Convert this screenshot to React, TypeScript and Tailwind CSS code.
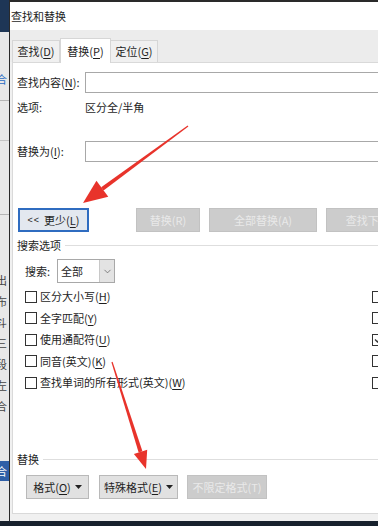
import React from 'react';
import { ChevronDown } from 'lucide-react';

const font = "font-['Noto_Sans_CJK_SC','Microsoft_YaHei',sans-serif]";

// label with one underlined access key, e.g. 查找内容(N):
function Key({ pre, k, post = ')' }: { pre: string; k: string; post?: string }) {
  return (
    <span className="whitespace-nowrap">
      {pre}(<span className="underline underline-offset-2">{k}</span>{post}
    </span>
  );
}

function Checkbox({ checked = false }: { checked?: boolean }) {
  return (
    <span className="w-[12px] h-[12px] flex-none border border-[#333] bg-white flex items-center justify-center">
      {checked && (
        <svg width="9" height="9" viewBox="0 0 9 9">
          <path d="M1 4.5 L3.5 7 L8 1.5" fill="none" stroke="#333" strokeWidth="1.3" />
        </svg>
      )}
    </span>
  );
}

function Arrow({ x1, y1, x2, y2, head, hw }: { x1: number; y1: number; x2: number; y2: number; head: number; hw: number }) {
  const dx = x2 - x1;
  const dy = y2 - y1;
  const len = Math.hypot(dx, dy);
  const ux = dx / len;
  const uy = dy / len;
  const nx = -uy;
  const ny = ux;
  const bx = x2 - ux * head;
  const by = y2 - uy * head;
  const w0 = 0.6;
  const w1 = 2;
  const shaft = [
    [x1 + nx * w0, y1 + ny * w0],
    [bx + nx * w1, by + ny * w1],
    [bx - nx * w1, by - ny * w1],
    [x1 - nx * w0, y1 - ny * w0],
  ];
  const tri = [
    [x2, y2],
    [bx + nx * hw, by + ny * hw],
    [bx - nx * hw, by - ny * hw],
  ];
  const pts = (a: number[][]) => a.map((p) => p.join(',')).join(' ');
  return (
    <g fill="#e8332b">
      <polygon points={pts(shaft)} />
      <polygon points={pts(tri)} />
    </g>
  );
}

function LeftStrip() {
  const chars = ['出', '布', '斗', '三', '段', '左', '合'];
  return (
    <div className={`w-[9px] flex-none flex flex-col overflow-hidden bg-[#e8e8e8] text-[11px] leading-none ${font}`}>
      <div className="h-[32px] bg-[#1e3656]" />
      <div className="h-[42px]" />
      <div className="h-[12px] -ml-[4px] text-[#2b6cc4]">合</div>
      <div className="h-[14px]" />
      <div className="h-px bg-[#b5b5b5]" />
      <div className="h-[39px]" />
      <div className="h-px bg-[#c4c4c4]" />
      <div className="h-[73px]" />
      <div className="h-px bg-[#b5b5b5]" />
      <div className="h-[55px]" />
      {chars.map((c, i) => (
        <div key={i} className="h-[21px] flex items-center -ml-[4px] text-[#444]">
          {c}
        </div>
      ))}
      <div className="h-[44px]" />
      <div className="h-[20px] bg-[#2f5fa7] flex items-center -ml-[4px] text-white">合</div>
      <div className="flex-1" />
    </div>
  );
}

export default function App() {
  return (
    <div className={`w-[378px] h-[526px] relative overflow-hidden flex flex-col bg-[#f0f0f0] text-[11px] text-[#1e1e1e] ${font}`}>
      <div className="flex flex-1 min-h-0">
        <LeftStrip />

        {/* Dialog */}
        <div className="flex-1 flex flex-col border-l border-t-2 border-[#2a2a2a] bg-[#f0f0f0] min-w-0">
          <div className="h-[28px] flex-none bg-white flex items-center pl-[1px] leading-none">查找和替换</div>

          {/* Tabs */}
          <div className="h-[32px] flex-none flex items-end pl-[2px] bg-[#ececec]">
            <div className="w-[48px] h-[22px] border border-b-0 border-[#d6d6d6] bg-[#f0f0f0] flex items-center justify-center leading-none">
              <Key pre="查找" k="D" />
            </div>
            <div className="w-[51px] h-[25px] -mb-px relative z-10 border border-b-0 border-[#d6d6d6] bg-white flex items-center justify-center leading-none">
              <Key pre="替换" k="P" />
            </div>
            <div className="w-[47px] h-[22px] border border-b-0 border-l-0 border-[#d6d6d6] bg-[#f0f0f0] flex items-center justify-center leading-none">
              <Key pre="定位" k="G" />
            </div>
          </div>

          {/* Panel */}
          <div className="ml-[2px] w-[420px] flex-1 flex flex-col bg-white border border-[#d9d9d9] pl-[4px] pb-[14px] leading-none">
            <div className="mt-[9px] h-[21px] flex items-center">
              <span className="w-[68px] flex-none">
                <Key pre="查找内容" k="N" post="):" />
              </span>
              <div className="w-[340px] h-full border border-[#a8a8a8] bg-white" />
            </div>

            <div className="mt-[6px] h-[16px] flex items-center">
              <span className="w-[68px] flex-none">选项:</span>
              <span>区分全/半角</span>
            </div>

            <div className="mt-[26px] h-[21px] flex items-center">
              <span className="w-[68px] flex-none">
                <Key pre="替换为" k="I" post="):" />
              </span>
              <div className="w-[340px] h-full border border-[#a8a8a8] bg-white" />
            </div>

            {/* Action buttons */}
            <div className="mt-[46px] h-[24px] flex items-stretch ml-[1px]">
              <button className="w-[71px] flex-none border-2 border-[#2f6cc0] bg-[#e3e8ef] flex items-center justify-center gap-[4px]">
                <span className="font-['Liberation_Sans',sans-serif] text-[9px] tracking-[1px]">&lt;&lt;</span>
                <Key pre="更少" k="L" />
              </button>
              <button className="ml-[47px] w-[64px] flex-none border border-[#c2c2c2] bg-[#cccccc] text-[#e9e9e9]">替换(R)</button>
              <button className="ml-[9px] w-[108px] flex-none border border-[#c2c2c2] bg-[#cccccc] text-[#e9e9e9]">全部替换(A)</button>
              <button className="ml-[9px] w-[108px] flex-none border border-[#c2c2c2] bg-[#cccccc] text-[#e9e9e9]">查找下一处(F)</button>
            </div>

            {/* 搜索选项 group */}
            <div className="mt-[6px] h-[14px] flex items-center">
              <span>搜索选项</span>
              <div className="flex-1 h-px bg-[#dedede] ml-[4px]" />
            </div>

            <div className="mt-[7px] h-[24px] flex items-center ml-[8px]">
              <span className="w-[32px] flex-none">搜索:</span>
              <div className="w-[58px] h-full flex border border-[#a8a8a8] bg-white">
                <span className="flex-1 flex items-center pl-[3px]">全部</span>
                <span className="w-[15px] bg-[#e3e3e3] border-l border-[#c8c8c8] flex items-center justify-center">
                  <ChevronDown size={11} strokeWidth={1.5} color="#555" />
                </span>
              </div>
            </div>

            <div className="mt-[3px] ml-[8px] grid grid-cols-[347px_auto]">
              {[
                { label: <Key pre="区分大小写" k="H" />, right: false },
                { label: <Key pre="全字匹配" k="Y" />, right: false },
                { label: <Key pre="使用通配符" k="U" />, right: true },
                { label: <Key pre="同音(英文)" k="K" />, right: false },
                { label: <Key pre="查找单词的所有形式(英文)" k="W" />, right: false },
              ].map((row, i) => (
                <React.Fragment key={i}>
                  <div className="h-[21.5px] flex items-center gap-[3px]">
                    <Checkbox />
                    {row.label}
                  </div>
                  <div className="h-[21.5px] flex items-center">
                    <Checkbox checked={row.right} />
                  </div>
                </React.Fragment>
              ))}
            </div>

            {/* 替换 group */}
            <div className="mt-auto h-[14px] flex items-center">
              <span>替换</span>
              <div className="flex-1 h-px bg-[#dedede] ml-[4px]" />
            </div>

            <div className="mt-[9px] h-[24px] flex items-stretch ml-[9px]">
              <button className="w-[63px] flex-none border border-[#b9b9b9] bg-[#e1e1e1] flex items-center justify-center gap-[4px]">
                <Key pre="格式" k="O" />
                <svg width="7" height="4" viewBox="0 0 7 4">
                  <path d="M0 0 H7 L3.5 4 Z" fill="#222" />
                </svg>
              </button>
              <button className="ml-[10px] w-[79px] flex-none border border-[#b9b9b9] bg-[#e1e1e1] flex items-center justify-center gap-[4px]">
                <Key pre="特殊格式" k="E" />
                <svg width="7" height="4" viewBox="0 0 7 4">
                  <path d="M0 0 H7 L3.5 4 Z" fill="#222" />
                </svg>
              </button>
              <button className="ml-[9px] w-[80px] flex-none border border-[#c2c2c2] bg-[#cccccc] text-[#e9e9e9]">不限定格式(T)</button>
            </div>
          </div>
          <div className="h-[7px] flex-none" />
        </div>
      </div>
      <div className="h-[5px] flex-none bg-[#17212d]" />

      {/* red annotation arrows */}
      <svg className="absolute inset-0 pointer-events-none" width="378" height="526" viewBox="0 0 378 526">
        <Arrow x1={188} y1={126} x2={83} y2={203} head={24} hw={10} />
        <Arrow x1={112} y1={362} x2={146} y2={469} head={18} hw={7} />
      </svg>
    </div>
  );
}
